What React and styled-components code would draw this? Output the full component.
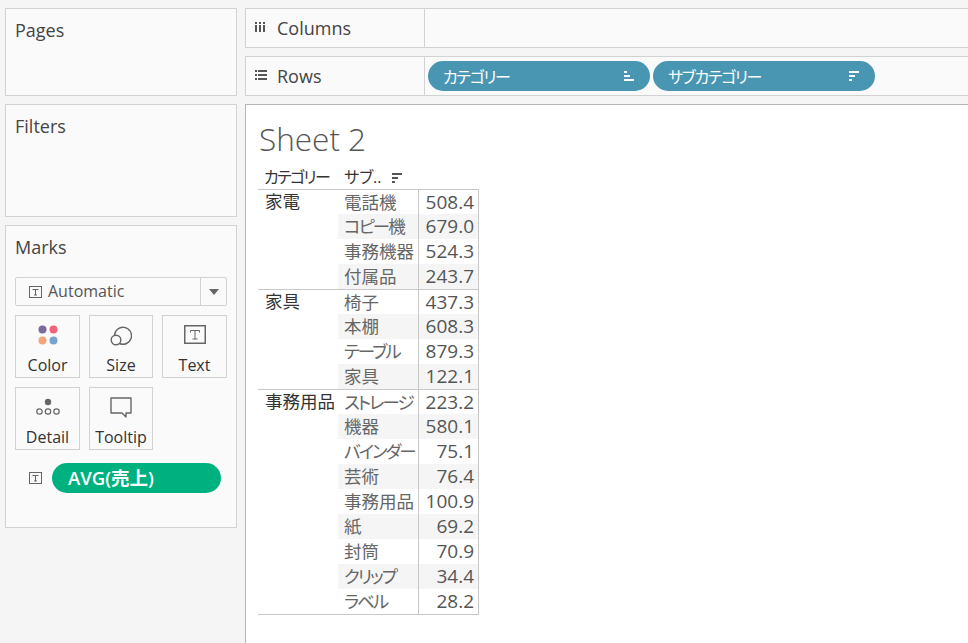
import React from 'react';
import styled, { createGlobalStyle } from 'styled-components';

const GlobalStyle = createGlobalStyle`
  html, body { margin: 0; padding: 0; height: 100%; background: #f5f5f5; overflow: hidden; }
  body { font-family: "Open Sans", "Noto Sans CJK JP", sans-serif; color: #333; font-feature-settings: "palt"; }
  * { box-sizing: border-box; }
`;

const groups = [
  { name: '家電', rows: [['電話機', '508.4'], ['コピー機', '679.0'], ['事務機器', '524.3'], ['付属品', '243.7']] },
  { name: '家具', rows: [['椅子', '437.3'], ['本棚', '608.3'], ['テーブル', '879.3'], ['家具', '122.1']] },
  {
    name: '事務用品',
    rows: [['ストレージ', '223.2'], ['機器', '580.1'], ['バインダー', '75.1'], ['芸術', '76.4'], ['事務用品', '100.9'],
      ['紙', '69.2'], ['封筒', '70.9'], ['クリップ', '34.4'], ['ラベル', '28.2']],
  },
];

const hasKana = s => /[\u30a0-\u30ff]/.test(s);

const Page = styled.div`
  width: 968px;
  height: 643px;
  padding: 8px 0 0 5px;
  display: grid;
  grid-template-columns: 232px 1fr;
  column-gap: 8px;
  overflow: hidden;
`;
const Side = styled.div`
  display: flex;
  flex-direction: column;
  gap: 8px;
`;
const Panel = styled.div`
  height: ${p => p.$h}px;
  background: #fafafa;
  border: 1px solid #d2d2d2;
  padding: 10px 9px 0;
`;
const PanelTitle = styled.div`
  font-size: 18px;
  line-height: 23px;
  color: #444;
`;
const MarkSelect = styled.div`
  margin-top: 18px;
  height: 29px;
  border: 1px solid #d2d2d2;
  border-radius: 2px;
  display: flex;
  align-items: center;
  padding-left: 13px;
  font-size: 16px;
  color: #555;
  gap: 6px;
`;
const SelectLabel = styled.span`
  flex: 1;
  margin-top: -1px;
`;
const SelectArrow = styled.div`
  width: 26px;
  height: 100%;
  border-left: 1px solid #d2d2d2;
  display: flex;
  align-items: center;
  justify-content: center;
  &::after {
    content: '';
    border-left: 5px solid transparent;
    border-right: 5px solid transparent;
    border-top: 6px solid #666;
  }
`;
const CardGrid = styled.div`
  margin-top: 9px;
  display: grid;
  grid-template-columns: 65px 64px 65px;
  grid-auto-rows: 63px;
  gap: 9px;
`;
const Card = styled.div`
  border: 1px solid #d2d2d2;
  display: flex;
  flex-direction: column;
  align-items: center;
  padding-top: 9px;
  font-size: 16px;
  line-height: 20px;
  color: #333;
`;
const CardIcon = styled.div`
  height: 30px;
  display: flex;
  align-items: flex-start;
  justify-content: center;
`;
const MarkRow = styled.div`
  margin-top: 13px;
  display: flex;
  align-items: center;
  padding-left: 14px;
  gap: 10px;
`;
const GreenPill = styled.div`
  width: 169px;
  height: 30px;
  border-radius: 15px;
  background: #00b180;
  color: #fff;
  font-size: 18.5px;
  font-weight: 600;
  line-height: 30px;
  padding-left: 16px;
`;
const Main = styled.div`
  display: flex;
  flex-direction: column;
  gap: 8px;
  min-width: 0;
`;
const Shelf = styled.div`
  height: 40px;
  margin-right: -10px;
  background: #fafafa;
  border: 1px solid #d2d2d2;
  display: flex;
  align-items: center;
`;
const ShelfLabel = styled.div`
  width: 179px;
  height: 100%;
  border-right: 1px solid #d2d2d2;
  display: flex;
  align-items: center;
  padding-left: 9px;
  font-size: 18px;
  color: #444;
`;
const ShelfIcon = styled.div`
  width: 22px;
  display: flex;
  align-items: center;
  margin-top: -2px;
`;
const ShelfPills = styled.div`
  display: flex;
  gap: 3px;
  padding-left: 3px;
`;
const Pill = styled.div`
  width: 222px;
  height: 30px;
  border-radius: 15px;
  background: #4996b2;
  color: #fff;
  font-size: 16px;
  display: flex;
  align-items: center;
  justify-content: space-between;
  padding: 0 15px;
`;
const PillLabel = styled.span`
  letter-spacing: -1.3px;
  margin-top: -1px;
`;
const View = styled.div`
  flex: 1;
  margin-right: -10px;
  background: #fff;
  border-top: 1px solid #b4b4b4;
  border-left: 1px solid #b4b4b4;
  padding: 14px 0 0 12px;
`;
const SheetTitle = styled.div`
  font-size: 31.5px;
  font-weight: 300;
  line-height: 40px;
  color: #555;
  padding-left: 1px;
`;
const Table = styled.div`
  width: 221px;
  margin-top: 4px;
`;
const HeaderRow = styled.div`
  height: 26px;
  display: flex;
  align-items: center;
  font-size: 16px;
  color: #333;
  white-space: nowrap;
`;
const HeaderCell = styled.div`
  width: 80px;
  padding-left: 6px;
  display: flex;
  align-items: center;
  gap: 10px;
  letter-spacing: ${p => (p.$tight ? '-1.6px' : '0')};
`;
const HeaderSort = styled.span`
  display: flex;
  margin-top: 4px;
`;
const Group = styled.div`
  display: flex;
  border-top: 1px solid #c8c8c8;
`;
const GroupName = styled.div`
  width: 80px;
  padding-left: 7px;
  font-size: 17.5px;
  line-height: 23px;
  color: #333;
`;
const GroupRows = styled.div`
  flex: 1;
  border-right: 1px solid #c8c8c8;
`;
const Row = styled.div`
  height: ${p => (p.$first ? 24 : 25)}px;
  display: flex;
  background: ${p => (p.$striped ? '#f5f5f5' : '#fff')};
  font-size: 17.5px;
  line-height: ${p => (p.$first ? 24 : 25)}px;
  color: #666;
`;
const SubCell = styled.div`
  width: 80px;
  padding-left: 6px;
  white-space: nowrap;
  letter-spacing: ${p => (p.$kana ? '-2px' : '0')};
`;
const ValueCell = styled.div`
  flex: 1;
  border-left: 1px solid #c8c8c8;
  text-align: right;
  padding-right: 4px;
  font-size: 19px;
  color: #555;
`;
const TableEnd = styled.div`
  border-top: 1px solid #c8c8c8;
`;

const TextIcon = () => (
  <svg width="13" height="12" viewBox="0 0 13 12">
    <rect x="0.5" y="0.5" width="12" height="11" fill="none" stroke="#666" />
    <path d="M3.5 3.5h6M6.5 3.5v5.5M5 9h3" fill="none" stroke="#666" />
  </svg>
);
const SortAsc = ({ color = '#fff' }) => (
  <svg width="11" height="10" viewBox="0 0 11 10" fill={color}>
    <rect x="0" y="0" width="3" height="2" />
    <rect x="0" y="4" width="6" height="2" />
    <rect x="0" y="8" width="10" height="2" />
  </svg>
);
const SortDesc = ({ color = '#fff' }) => (
  <svg width="11" height="10" viewBox="0 0 11 10" fill={color}>
    <rect x="0" y="0" width="10" height="2" />
    <rect x="0" y="4" width="6" height="2" />
    <rect x="0" y="8" width="3" height="2" />
  </svg>
);
const ColumnsIcon = () => (
  <svg width="11" height="10" viewBox="0 0 11 10" fill="#555">
    <rect x="0" y="0" width="2" height="2" />
    <rect x="0" y="3" width="2" height="7" />
    <rect x="4" y="0" width="2" height="2" />
    <rect x="4" y="3" width="2" height="7" />
    <rect x="8" y="0" width="2" height="2" />
    <rect x="8" y="3" width="2" height="7" />
  </svg>
);
const RowsIcon = () => (
  <svg width="12" height="10" viewBox="0 0 12 10" fill="#555">
    <rect x="0" y="0" width="2" height="2" />
    <rect x="3" y="0" width="9" height="2" />
    <rect x="0" y="4" width="2" height="2" />
    <rect x="3" y="4" width="9" height="2" />
    <rect x="0" y="8" width="2" height="2" />
    <rect x="3" y="8" width="9" height="2" />
  </svg>
);
const ColorIcon = () => (
  <svg width="20" height="20" viewBox="0 0 20 20">
    <circle cx="4.5" cy="4.5" r="4" fill="#7b6a9b" />
    <circle cx="15.5" cy="4.5" r="4" fill="#f2647a" />
    <circle cx="4.5" cy="15.5" r="4" fill="#f4a67a" />
    <circle cx="15.5" cy="15.5" r="4" fill="#7ba3cf" />
  </svg>
);
const SizeIcon = () => (
  <svg width="22" height="21" viewBox="0 0 22 21" fill="none" stroke="#666" strokeWidth="1.4">
    <path d="M4.5 10.5A8.5 8.5 0 1 1 9.5 18.5" />
    <circle cx="6" cy="15" r="4.8" />
  </svg>
);
const BigTextIcon = () => (
  <svg width="22" height="19" viewBox="0 0 22 19" fill="none" stroke="#666">
    <rect x="0.75" y="0.75" width="20.5" height="17.5" strokeWidth="1.5" />
    <path d="M6.5 5.5h9M11 5.5v8.5M8.5 14h5M6.5 5.5v2M15.5 5.5v2" />
  </svg>
);
const DetailIcon = () => (
  <svg width="24" height="18" viewBox="0 0 24 18" fill="none" stroke="#666" strokeWidth="1.2">
    <circle cx="12" cy="5" r="3.2" fill="#666" stroke="none" />
    <circle cx="3.5" cy="14.5" r="2.7" />
    <circle cx="12" cy="14.5" r="2.7" />
    <circle cx="20.5" cy="14.5" r="2.7" />
  </svg>
);
const TooltipIcon = () => (
  <svg width="22" height="21" viewBox="0 0 22 21" fill="none" stroke="#666" strokeWidth="1.4">
    <path d="M1 1h20v15h-5v4l-4-4H1z" strokeLinejoin="round" />
  </svg>
);

const cards = [
  { label: 'Color', icon: <ColorIcon /> },
  { label: 'Size', icon: <SizeIcon /> },
  { label: 'Text', icon: <BigTextIcon /> },
  { label: 'Detail', icon: <DetailIcon /> },
  { label: 'Tooltip', icon: <TooltipIcon /> },
];

export default function App() {
  return (
    <>
      <GlobalStyle />
      <Page>
        <Side>
          <Panel $h={88}><PanelTitle>Pages</PanelTitle></Panel>
          <Panel $h={113}><PanelTitle>Filters</PanelTitle></Panel>
          <Panel $h={303}>
            <PanelTitle>Marks</PanelTitle>
            <MarkSelect>
              <TextIcon />
              <SelectLabel>Automatic</SelectLabel>
              <SelectArrow />
            </MarkSelect>
            <CardGrid>
              {cards.map(c => (
                <Card key={c.label}>
                  <CardIcon>{c.icon}</CardIcon>
                  {c.label}
                </Card>
              ))}
            </CardGrid>
            <MarkRow>
              <TextIcon />
              <GreenPill>AVG(売上)</GreenPill>
            </MarkRow>
          </Panel>
        </Side>
        <Main>
          <Shelf>
            <ShelfLabel><ShelfIcon><ColumnsIcon /></ShelfIcon>Columns</ShelfLabel>
          </Shelf>
          <Shelf>
            <ShelfLabel><ShelfIcon><RowsIcon /></ShelfIcon>Rows</ShelfLabel>
            <ShelfPills>
              <Pill><PillLabel>カテゴリー</PillLabel><SortAsc /></Pill>
              <Pill><PillLabel>サブカテゴリー</PillLabel><SortDesc /></Pill>
            </ShelfPills>
          </Shelf>
          <View>
            <SheetTitle>Sheet 2</SheetTitle>
            <Table>
              <HeaderRow>
                <HeaderCell $tight>カテゴリー</HeaderCell>
                <HeaderCell>サブ..<HeaderSort><SortDesc color="#555" /></HeaderSort></HeaderCell>
              </HeaderRow>
              {groups.map(g => (
                <Group key={g.name}>
                  <GroupName>{g.name}</GroupName>
                  <GroupRows>
                    {g.rows.map(([sub, val], i) => (
                      <Row key={sub} $first={i === 0} $striped={i % 2 === 1}>
                        <SubCell $kana={hasKana(sub)}>{sub}</SubCell>
                        <ValueCell>{val}</ValueCell>
                      </Row>
                    ))}
                  </GroupRows>
                </Group>
              ))}
              <TableEnd />
            </Table>
          </View>
        </Main>
      </Page>
    </>
  );
}
